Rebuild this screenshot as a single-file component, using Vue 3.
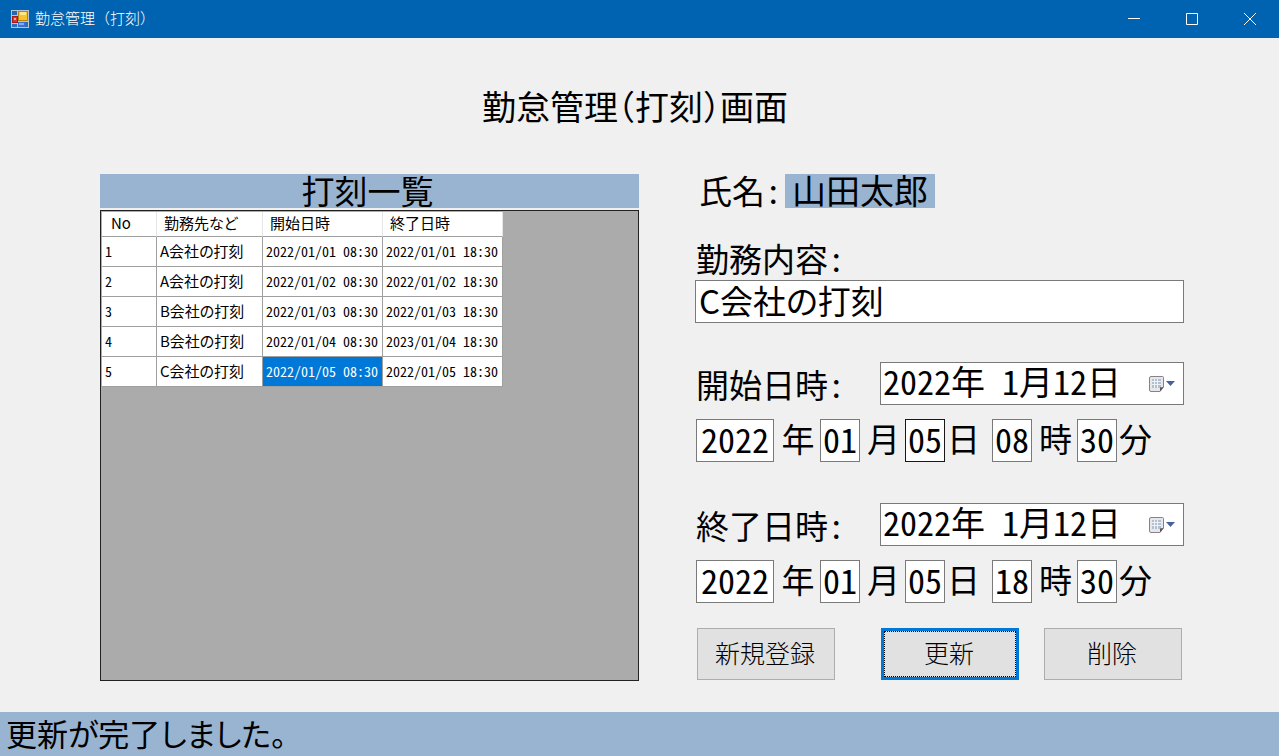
<script setup>
import { reactive, ref } from 'vue'

const rows = [
  { no: 1, work: 'A会社の打刻', start: '2022/01/01 08:30', end: '2022/01/01 18:30' },
  { no: 2, work: 'A会社の打刻', start: '2022/01/02 08:30', end: '2022/01/02 18:30' },
  { no: 3, work: 'B会社の打刻', start: '2022/01/03 08:30', end: '2022/01/03 18:30' },
  { no: 4, work: 'B会社の打刻', start: '2022/01/04 08:30', end: '2023/01/04 18:30' },
  { no: 5, work: 'C会社の打刻', start: '2022/01/05 08:30', end: '2022/01/05 18:30' }
]
const selectedNo = ref(5)
const work = ref('C会社の打刻')

const makeParts = (day, hour) => [
  { key: 'year', unit: '年', value: '2022' },
  { key: 'month', unit: '月', value: '01' },
  { key: 'day', unit: '日', value: day },
  { key: 'hour', unit: '時', value: hour },
  { key: 'minute', unit: '分', value: '30' }
]
const stamps = reactive([
  { id: 'start', label: '開始日時', date: '2022年 1月12日', parts: makeParts('05', '08'), hot: 'day' },
  { id: 'end', label: '終了日時', date: '2022年 1月12日', parts: makeParts('05', '18'), hot: '' }
])
</script>

<template>
  <div class="window">
    <header class="titlebar">
      <svg class="app-icon" width="18" height="18" viewBox="0 0 18 18" aria-hidden="true">
        <rect width="18" height="18" fill="#b9c4cf" />
        <rect x="1" y="1" width="5" height="4" fill="#2468b4" />
        <rect x="1" y="14" width="5" height="3" fill="#2f6fb8" />
        <rect x="14" y="12" width="3" height="5" fill="#2f6fb8" />
        <rect x="7" y="1" width="10" height="10" fill="#b98512" />
        <rect x="8" y="2" width="8" height="8" fill="#f6c431" />
        <rect x="9" y="2" width="6" height="3" fill="#fde58c" />
        <rect x="1" y="6" width="6" height="7" fill="#a3191c" />
        <rect x="2" y="7" width="4" height="5" fill="#d13a34" />
        <rect x="3" y="8" width="2" height="2" fill="#f3aaa0" />
        <rect x="7" y="12" width="7" height="5" fill="#3f70d0" />
        <rect x="8" y="13" width="5" height="2" fill="#86aaf0" />
      </svg>
      <span class="caption">勤怠管理（打刻）</span>
      <button class="win-btn" type="button" aria-label="最小化">
        <svg width="12" height="12" viewBox="0 0 12 12"><path d="M0 5.500H12" /></svg>
      </button>
      <button class="win-btn" type="button" aria-label="最大化">
        <svg width="12" height="12" viewBox="0 0 12 12"><path d="M.5 .5H11.500V11.500H.5Z" /></svg>
      </button>
      <button class="win-btn" type="button" aria-label="閉じる">
        <svg width="12" height="12" viewBox="0 0 12 12"><path d="M0 0 12 12M12 0 0 12" /></svg>
      </button>
    </header>

    <main class="content">
      <h1>勤怠管理（打刻）画面</h1>
      <div class="columns">
        <section class="list">
          <h2>打刻一覧</h2>
          <div class="grid-box">
            <table>
              <colgroup>
                <col class="c-no" /><col class="c-work" /><col class="c-time" /><col class="c-time" />
              </colgroup>
              <thead>
                <tr><th>No</th><th>勤務先など</th><th>開始日時</th><th>終了日時</th></tr>
              </thead>
              <tbody>
                <tr v-for="row in rows" :key="row.no">
                  <td class="num">{{ row.no }}</td>
                  <td>{{ row.work }}</td>
                  <td class="num" :class="{ selected: row.no === selectedNo }">{{ row.start }}</td>
                  <td class="num">{{ row.end }}</td>
                </tr>
              </tbody>
            </table>
          </div>
        </section>

        <form class="detail" @submit.prevent>
          <div class="name-row">
            <span class="caption-text">氏名:</span><output class="person">山田太郎</output>
          </div>
          <label class="caption-text work-label" for="work">勤務内容:</label>
          <input id="work" v-model="work" class="box work-input" type="text" />

          <div v-for="s in stamps" :key="s.id" class="stamp">
            <div class="stamp-head">
              <label class="caption-text" :for="s.id">{{ s.label }}:</label>
              <div class="picker box">
                <input :id="s.id" v-model="s.date" type="text" />
                <button type="button" aria-label="カレンダーを開く">
                  <svg width="28" height="18" viewBox="0 0 28 18">
                    <path d="M2 1.500H13.500Q14.500 1.500 14.500 2.500V12L11 16.500H2Q.5 16.500 .5 15V3Q.5 1.500 2 1.500Z" fill="#e4e8ee" stroke="#8b8082" />
                    <path d="M3 4H12V13H3Z" fill="#b3bfcf" />
                    <path d="M3 6.500H12M3 9.500H12M5.500 4V13M8.500 4V13" stroke="#eef2f6" fill="none" />
                    <path d="M14.500 12 11 16.500V12.500Z" fill="#5d5355" />
                    <path d="M17 6H26L21.500 11Z" fill="#46619b" />
                  </svg>
                </button>
              </div>
            </div>
            <div class="parts">
              <template v-for="p in s.parts" :key="p.key">
                <input :id="s.id + p.key" v-model="p.value" class="box part" :class="{ hot: s.hot === p.key }" type="text" />
                <label :for="s.id + p.key" :class="'unit-' + p.key">{{ p.unit }}</label>
              </template>
            </div>
          </div>

          <div class="actions">
            <button type="button">新規登録</button>
            <button type="submit" class="primary">更新</button>
            <button type="button">削除</button>
          </div>
        </form>
      </div>
    </main>

    <footer class="status" role="status">更新が完了しました。</footer>
  </div>
</template>

<style>
body {
  background: #f0f0f0;
}
</style>

<style scoped>
.window {
  display: flex;
  flex-direction: column;
  min-height: 100vh;
  color: #000;
  background: #f0f0f0;
  font-family: "Noto Sans CJK JP", sans-serif;
  font-size: 34px;
  line-height: 34px;
  font-feature-settings: "halt";
}
.window *,
.window {
  box-sizing: border-box;
}
input,
button {
  font: inherit;
  color: inherit;
  border-radius: 0;
  font-feature-settings: inherit;
}
.titlebar {
  display: flex;
  align-items: center;
  height: 38px;
  padding-left: 11px;
  background: #0063b1;
  color: #fff;
}
.caption {
  flex: 1;
  margin-left: 6px;
  padding-bottom: 2px;
  font-size: 15px;
  line-height: 20px;
  font-weight: 300;
  font-feature-settings: normal;
}
.win-btn {
  display: flex;
  align-items: center;
  justify-content: center;
  width: 58px;
  height: 38px;
  padding: 0;
  border: 0;
  background: none;
}
.win-btn path {
  fill: none;
  stroke: #fff;
}
.content {
  flex: 1;
  display: flex;
  flex-direction: column;
  padding: 52px 95px 31px 100px;
}
h1,
h2 {
  margin: 0;
  padding-bottom: 2px;
  line-height: 32px;
  font-weight: 400;
  text-align: center;
}
h1 {
  margin-bottom: 50px;
  padding-right: 14px;
  font-size: 34px;
}
h2,
.caption-text,
.work-input {
  font-size: 33px;
}
h2 {
  padding-right: 4px;
}
.columns {
  flex: 1;
  display: grid;
  grid-template-columns: 539fr 489fr;
  gap: 56px;
}
.list {
  display: flex;
  flex-direction: column;
  gap: 2px;
}
h2,
.person,
.status {
  background: #99b4d1;
}
.grid-box {
  flex: 1;
  padding: 1px;
  border: 1px solid #222;
  background: #ababab;
}
table {
  table-layout: fixed;
  width: 401px;
  border-collapse: separate;
  border-spacing: 0;
  background: #fff;
  font-size: 15px;
  line-height: 20px;
  font-feature-settings: "palt";
}
.c-no { width: 55px; }
.c-work { width: 106px; }
.c-time { width: 120px; }
th,
td {
  border-right: 1px solid #a0a0a0;
  border-bottom: 1px solid #a0a0a0;
  text-align: left;
  font-weight: 400;
  white-space: nowrap;
}
th {
  height: 25px;
  padding: 0 0 2px 7px;
  border-right-color: #e5e5e5;
}
th:first-child {
  padding-left: 9px;
}
td {
  height: 30px;
  padding: 0 0 2px 3px;
}
.num {
  font-size: 14px;
  font-feature-settings: "hwid";
}
.selected {
  background: #0078d7;
  color: #fff;
}
.detail {
  display: flex;
  flex-direction: column;
}
.name-row {
  display: flex;
  padding-left: 4px;
}
.caption-text {
  font-feature-settings: "hwid";
}
.name-row .caption-text {
  flex: 0 0 86px;
}
.name-row .caption-text,
.person {
  line-height: 32px;
  padding-bottom: 2px;
}
.person {
  padding-left: 7px;
  padding-right: 7px;
}
.work-label {
  margin-top: 33px;
  padding-left: 1px;
}
.box {
  height: 43px;
  border: 1px solid #7a7a7a;
  background: #fff;
}
.work-input {
  width: 100%;
  margin-top: 5px;
  padding: 0 3px 4px;
  font-feature-settings: "palt";
}
.stamp {
  margin-top: 39px;
}
.stamp + .stamp {
  margin-top: 41px;
}
.stamp-head {
  display: flex;
  justify-content: space-between;
  align-items: center;
}
.stamp-head .caption-text {
  padding-left: 1px;
}
.picker {
  display: flex;
  align-items: center;
  width: 304px;
  padding: 0 6px 0 2px;
}
.picker input {
  flex: 1;
  min-width: 0;
  height: 41px;
  padding: 0 0 6px;
  border: 0;
  background: none;
  font-feature-settings: "hwid";
}
.picker button {
  display: flex;
  padding: 0;
  border: 0;
  background: none;
}
.parts {
  display: grid;
  grid-template-columns: 78px 46px 40px 45px 40px 47px 40px 45px 40px 40px;
  align-items: center;
  margin: 14px 0 0 1px;
  text-align: center;
}
.parts label {
  padding: 0 0 6px 2px;
  font-size: 33px;
}
.parts .unit-day,
.parts .unit-minute {
  text-align: left;
}
.part {
  width: 100%;
  padding: 0 0 4px;
  text-align: center;
  font-feature-settings: "hwid";
}
.hot {
  border-color: #171717;
}
.actions {
  display: grid;
  grid-template-columns: 138px 138px 138px;
  column-gap: 25px;
  margin: 25px 2px 0;
}
.actions button {
  height: 52px;
  padding: 0 2px 4px 0;
  border: 1px solid #adadad;
  background: #e1e1e1;
  font-size: 25px;
  font-weight: 300;
}
.actions button:first-child {
  margin-right: 21px;
}
.actions {
  grid-template-columns: 159px 138px 138px;
}
.actions .primary {
  border: 3px solid #0078d7;
  outline: 1px dotted #000;
  outline-offset: -4px;
}
.status {
  height: 44px;
  padding: 4px 6px 6px;
  font-size: 31px;
  font-feature-settings: "palt";
}
</style>
